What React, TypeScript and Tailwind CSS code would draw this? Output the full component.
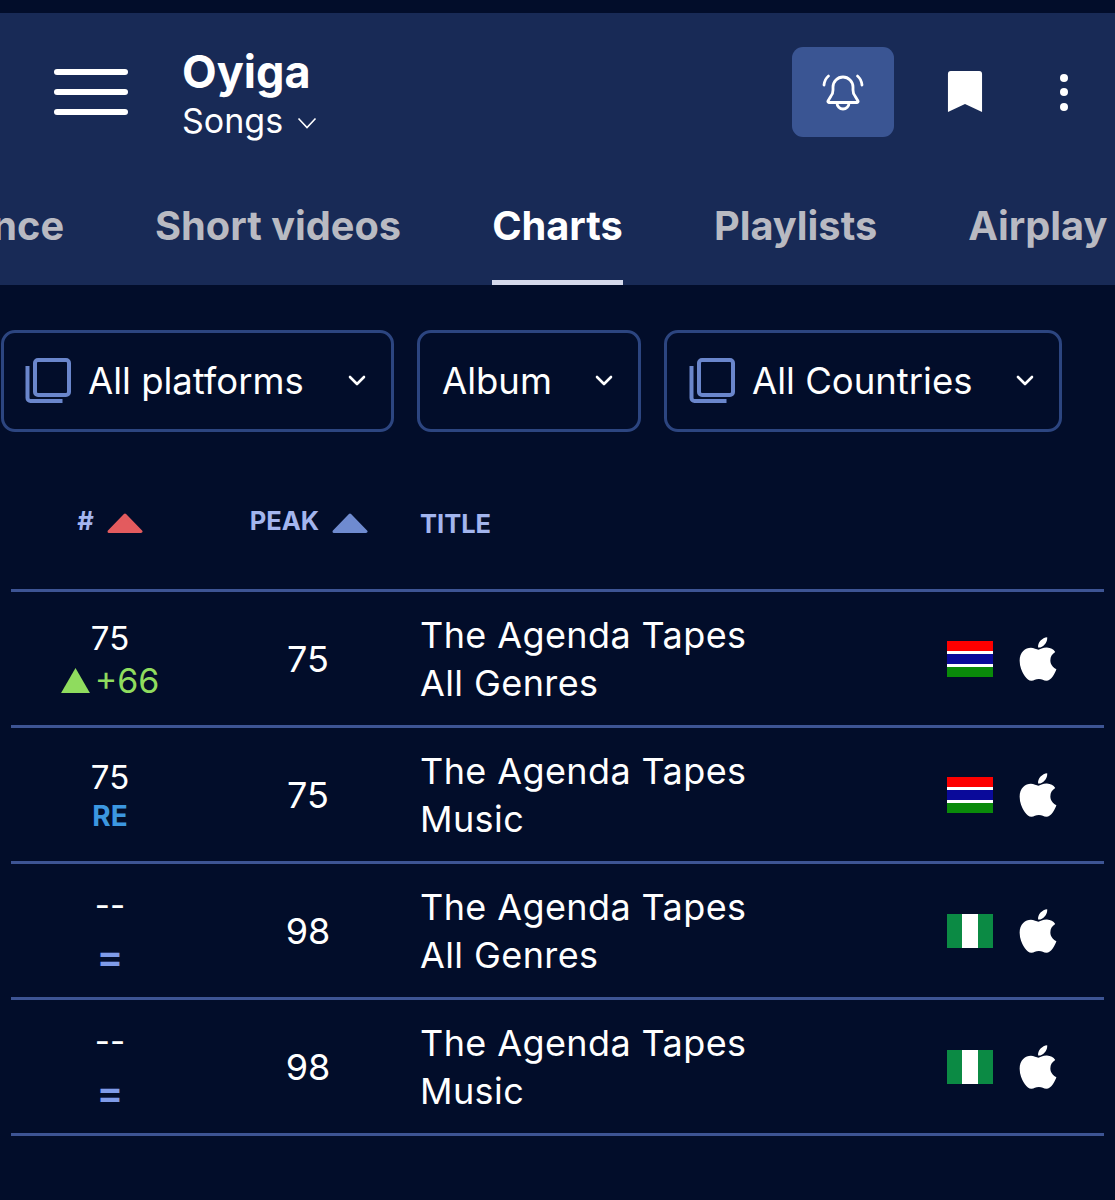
import { FaApple } from 'react-icons/fa';

const font = "[font-family:Inter,'Noto_Sans',sans-serif]";

function Gambia() {
  return (
    <svg width="46" height="36" viewBox="0 0 46 36" className="block">
      <rect width="46" height="11" fill="#fd0000" />
      <rect y="10" width="46" height="3" fill="#ffffff" />
      <rect y="13" width="46" height="10" fill="#0a0a9a" />
      <rect y="23" width="46" height="3" fill="#ffffff" />
      <rect y="26" width="46" height="10" fill="#0a8a0a" />
    </svg>
  );
}

function Nigeria() {
  return (
    <svg width="46" height="34" viewBox="0 0 46 34" className="block">
      <rect width="46" height="34" fill="#ffffff" />
      <rect width="15" height="34" fill="#0b8a44" />
      <rect x="31" width="15" height="34" fill="#0b8a44" />
    </svg>
  );
}

function CopyIcon() {
  return (
    <svg width="46" height="46" viewBox="0 0 46 46" fill="none" stroke="#6a86cc" strokeWidth="4" className="shrink-0">
      <rect x="10" y="2" width="34" height="35" rx="3" />
      <path d="M2.500 8v32a3 3 0 0 0 3 3h32" />
    </svg>
  );
}

function Chevron({ className }: { className: string }) {
  return (
    <svg width="18" height="12" viewBox="0 0 18 12" fill="none" stroke="currentColor" strokeWidth="2.6" strokeLinecap="round" strokeLinejoin="round" className={className}>
      <path d="M2 2l7 7 7-7" />
    </svg>
  );
}

function Triangle({ color }: { color: string }) {
  return (
    <svg width="36" height="21" viewBox="0 0 36 21" className="mt-[4px]">
      <path d="M18 2L34 18.5H2Z" fill={color} stroke={color} strokeWidth="3" strokeLinejoin="round" />
    </svg>
  );
}

function Filter({ label, icon, className }: { label: string; icon?: boolean; className: string }) {
  return (
    <div className={`h-[102px] flex items-center shrink-0 border-[3px] border-[#2c4580] rounded-[14px] text-white text-[36.5px] ${className}`}>
      {icon && <CopyIcon />}
      <span className={icon ? 'ml-[17px]' : ''}>{label}</span>
      <Chevron className="ml-auto" />
    </div>
  );
}

type RowData = {
  rank: string;
  change: 'up' | 're' | 'same';
  peak: string;
  sub: string;
  flag: 'gm' | 'ng';
};

const rows: RowData[] = [
  { rank: '75', change: 'up', peak: '75', sub: 'All Genres', flag: 'gm' },
  { rank: '75', change: 're', peak: '75', sub: 'Music', flag: 'gm' },
  { rank: '--', change: 'same', peak: '98', sub: 'All Genres', flag: 'ng' },
  { rank: '--', change: 'same', peak: '98', sub: 'Music', flag: 'ng' },
];

function Row({ row }: { row: RowData }) {
  return (
    <div className="h-[136px] flex items-center border-b-[3px] border-[#3d5494] text-white">
      <div className="w-[198px] flex flex-col items-center">
        {row.change === 'up' && (
          <>
            <div className="h-[44px] flex items-center text-[33px] leading-none">{row.rank}</div>
            <div className="h-[40px] flex items-center text-[34px] leading-none text-[#8fdc5e]">
              <svg width="29" height="25" viewBox="0 0 30 26" className="mr-[5px]"><path d="M15 0L30 26H0Z" fill="#8fdc5e" /></svg>
              +66
            </div>
          </>
        )}
        {row.change === 're' && (
          <div className="flex flex-col items-center mt-[3px]">
            <div className="h-[40px] flex items-center text-[33px] leading-none">{row.rank}</div>
            <div className="h-[38px] flex items-center text-[28px] leading-none font-bold text-[#3c97e0]">RE</div>
          </div>
        )}
        {row.change === 'same' && (
          <>
            <div className="h-[52px] flex items-center text-[33px] leading-none">{row.rank}</div>
            <div className="h-[50px] flex items-center text-[40px] leading-none font-semibold text-[#7f9be8]">=</div>
          </>
        )}
      </div>
      <div className="w-[198px] text-center text-[36px] leading-none">{row.peak}</div>
      <div className="pl-[13px] text-[36px] leading-[48px] tracking-[0.4px]">
        <div>The Agenda Tapes</div>
        <div>{row.sub}</div>
      </div>
      <div className="ml-auto mr-[41px] flex items-center">
        {row.flag === 'gm' ? <Gambia /> : <Nigeria />}
        <FaApple className="ml-[20px] text-white" size={50} />
      </div>
    </div>
  );
}

export default function App() {
  return (
    <div className={`h-[1200px] bg-[#020d2a] pt-[13px] overflow-hidden ${font}`}>
      <div className="h-[272px] bg-[#182a56] flex flex-col">
        <div className="flex items-center pl-[54px] pt-[34px]">
          <div className="w-[74px] flex flex-col gap-[14px] shrink-0 mb-[5px]">
            <div className="h-[6px] rounded-full bg-white" />
            <div className="h-[6px] rounded-full bg-white" />
            <div className="h-[6px] rounded-full bg-white" />
          </div>
          <div className="ml-[54px] text-white">
            <div className="text-[45px] leading-[50px] font-bold">Oyiga</div>
            <div className="flex items-center text-[34px] leading-[42px] mt-[3px]">
              Songs
              <svg width="20" height="12" viewBox="0 0 20 12" fill="none" stroke="white" strokeWidth="1.6" className="ml-[14px] mt-[3px]"><path d="M1.500 1.500L10 10.500l8.500-9" /></svg>
            </div>
          </div>
          <div className="ml-auto flex items-center mr-[47px] mb-[5px]">
            <div className="w-[102px] h-[90px] rounded-[11px] bg-[#3a5593] flex items-center justify-center">
              <svg width="44" height="44" viewBox="0 0 44 44" fill="none" stroke="white" strokeWidth="2.8" strokeLinecap="round" strokeLinejoin="round">
                <path d="M10 26c0 0 2-2.500 2-6v-3a10 10 0 0 1 20 0v3c0 3.500 2 6 2 6l3 5a1 1 0 0 1-1 1.500H8a1 1 0 0 1-1-1.500Z" />
                <path d="M16 33a6 6 0 0 0 12 0" />
                <path d="M3 15c.5-4 2-7 4.500-9M41 15c-.5-4-2-7-4.500-9" />
              </svg>
            </div>
            <svg width="36" height="42" viewBox="0 0 38 42" preserveAspectRatio="none" className="ml-[53px]">
              <path d="M4 0h30a3 3 0 0 1 3 3v38l-18-8-18 8V3a3 3 0 0 1 3-3Z" fill="white" />
            </svg>
            <div className="ml-[77px] flex flex-col gap-[6.500px] w-[8px]">
              <div className="w-[8px] h-[8px] rounded-full bg-white" />
              <div className="w-[8px] h-[8px] rounded-full bg-white" />
              <div className="w-[8px] h-[8px] rounded-full bg-white" />
            </div>
          </div>
        </div>
        <div className="mt-auto flex gap-[91px] whitespace-nowrap text-[39.750px] font-bold text-[#b9bac2] ml-[-189px] w-[1500px]">
          <div className="h-[89px] shrink-0">Performance</div>
          <div className="h-[89px] shrink-0">Short videos</div>
          <div className="h-[89px] shrink-0 text-white border-b-[5px] border-[#d5d9ec]">Charts</div>
          <div className="h-[89px] shrink-0">Playlists</div>
          <div className="h-[89px] shrink-0">Airplay</div>
        </div>
      </div>

      <div className="flex gap-[23px] mt-[45px] pl-[1px]">
        <Filter label="All platforms" icon className="w-[393px] pl-[21px] pr-[25px]" />
        <Filter label="Album" className="w-[224px] pl-[22px] pr-[25px]" />
        <Filter label="All Countries" icon className="w-[398px] pl-[22px] pr-[25px]" />
      </div>

      <div className="mx-[11px] mt-[52px]">
        <div className="h-[108px] flex items-center border-b-[3px] border-[#3d5494] pb-[30px] text-[25.500px] font-bold text-[#a3b5ee]">
          <div className="w-[198px] flex items-center justify-center gap-[13px]">
            <span>#</span>
            <Triangle color="#e35b5e" />
          </div>
          <div className="w-[198px] flex items-center justify-center gap-[13px] pl-[2px]">
            <span>PEAK</span>
            <Triangle color="#6f8bd0" />
          </div>
          <div className="pl-[13px] pt-[6px]">TITLE</div>
        </div>
        {rows.map((row, i) => (
          <Row key={i} row={row} />
        ))}
      </div>
    </div>
  );
}
